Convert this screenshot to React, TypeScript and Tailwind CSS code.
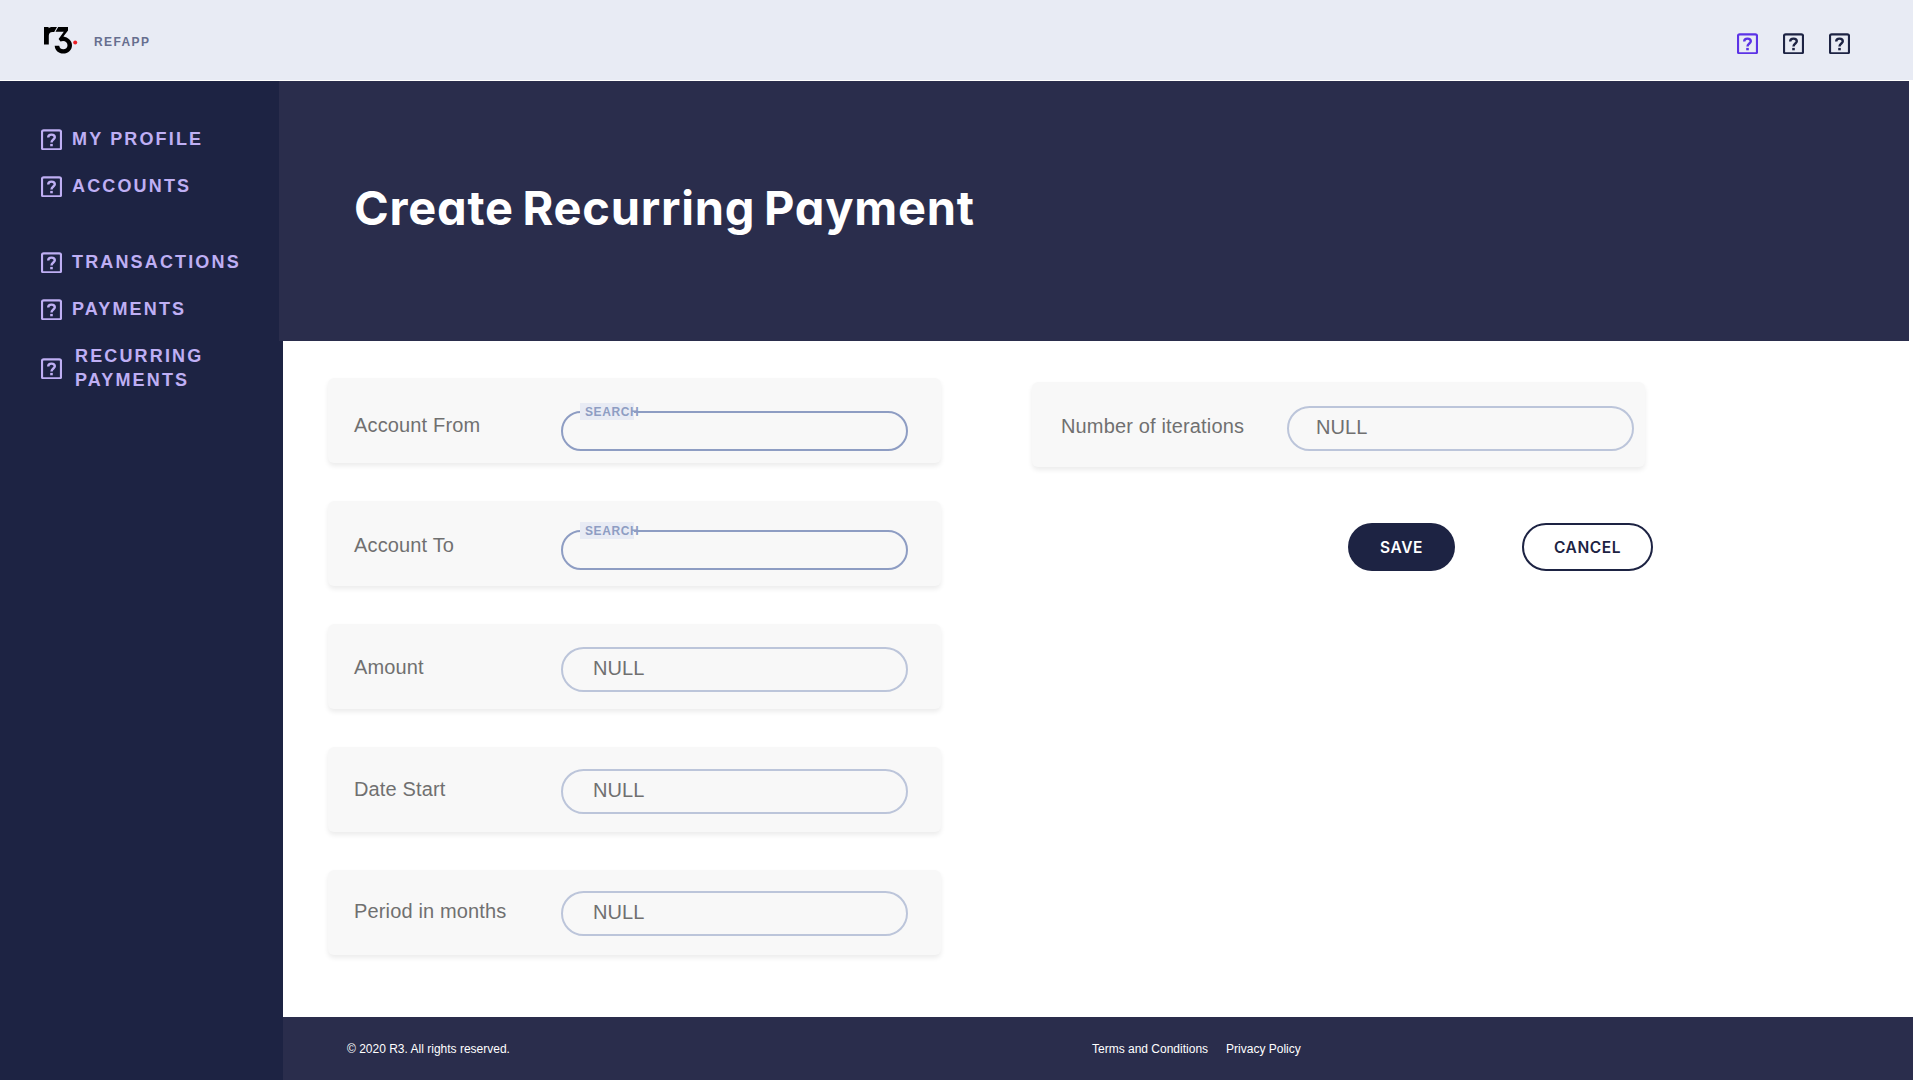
const label = "shrink-0 whitespace-nowrap text-[20px] leading-6 tracking-[0.15px] text-[#707070]";

function HelpBox({ className = "" }: { className?: string }) {
  return (
    <svg className={"shrink-0 " + className} width="21" height="21" viewBox="0 0 21 21" fill="none" stroke="currentColor">
      <rect x="1" y="1.300" width="19" height="19" rx="1.600" strokeWidth="2.200" />
      <path d="M7.200 8.500C7.200 6.500 8.600 5.600 10.500 5.600S13.800 6.700 13.800 8.300C13.800 10.500 10.500 10.600 10.500 13.500" strokeWidth="2.400" />
      <path d="M10.500 14.900v2.400" strokeWidth="2.600" />
    </svg>
  );
}

function Logo() {
  return (
    <svg className="shrink-0" width="36" height="30" viewBox="0 0 36 30">
      <path d="M2 2h4.6v1.2C7.600 2.300 9 2 10.500 2H15l-2.800 5H10.500C8 7 6.800 8.500 6.800 10.800V19.500H2z" fill="#000" />
      <path d="M16.200 2H26v3.500l-4.600 6C26 12.300 30 15.600 30 20.200c0 5-4 8.300-8.700 8.300-4.700 0-8.300-3-8.600-7.800h4.500c.3 2.300 2 3.600 4.100 3.600 2.400 0 4.200-1.700 4.200-4.100s-1.900-4.100-4.400-4.100c-1 0-1.900.2-2.600.5L16.600 14l5.200-7.200h-8.300z" fill="#000" />
      <circle cx="33.200" cy="17.500" r="2" fill="#ec1d24" />
    </svg>
  );
}

function NavItem({ text, className = "" }: { text: string; className?: string }) {
  return (
    <a className={"flex items-center " + className}>
      <HelpBox className="mb-[2px]" />
      <span className="pb-[3px] text-[18px] font-bold leading-6 tracking-[2.15px]">{text}</span>
    </a>
  );
}

function SearchInput({ className }: { className: string }) {
  return (
    <div className={"relative h-10 w-[347px] shrink-0 rounded-full border-2 border-[#8e9dc3] " + className}>
      <span className="absolute -top-[10px] left-[17px] h-[17px] w-[54px] whitespace-nowrap bg-[#e8ebf4] pl-[5px] text-[12px] font-bold leading-[19px] tracking-[0.6px] text-[#8e9dc3]">
        SEARCH
      </span>
    </div>
  );
}

function TextInput({ className }: { className: string }) {
  return (
    <div className={"h-[45px] w-[347px] shrink-0 rounded-full border-2 border-[#bcc5da] pt-[7px] text-[20px] leading-6 tracking-[0.1px] text-[#707070] " + className}>
      NULL
    </div>
  );
}

const card = "flex h-[85px] w-[613px] items-start rounded-[6px] bg-[#f8f8f8] shadow-[0_3px_5px_rgba(0,0,0,0.08)]";

export default function App() {
  return (
    <div className="flex h-[1080px] w-[1920px] flex-col overflow-hidden bg-white font-['Liberation_Sans',Arial,sans-serif]">
      <header className="mb-px flex h-20 w-[1913px] shrink-0 items-start bg-[#e8ebf4]">
        <div className="ml-[42px] mt-[25px]"><Logo /></div>
        <span className="ml-[16px] mt-[33px] text-[12px] font-bold leading-[18px] tracking-[1.4px] text-[#666e8e]">REFAPP</span>
        <div className="ml-auto mr-[63px] mt-[33px] flex gap-[25px] text-[#1d2343]">
          <HelpBox className="text-[#5c33e6]" />
          <HelpBox />
          <HelpBox />
        </div>
      </header>

      <div className="flex min-h-0 flex-1">
        <nav className="flex w-[283px] shrink-0 flex-col bg-[#1d2343] pl-[41px] text-[#bfaff4]">
          <NavItem text="MY PROFILE" className="mt-[46px] gap-[10px]" />
          <NavItem text="ACCOUNTS" className="mt-5 gap-[10px]" />
          <NavItem text="TRANSACTIONS" className="mt-[49px] gap-[10px]" />
          <NavItem text="PAYMENTS" className="mt-5 gap-[10px]" />
          <NavItem text="RECURRING PAYMENTS" className="mt-5 w-[190px] gap-[13px]" />
        </nav>

        <div className="flex min-w-0 flex-1 flex-col">
          <section className="z-10 -ml-1 h-[260px] w-[1630px] shrink-0 bg-[#2a2d4c] pl-[75px] pt-[91px]">
            <h1 className="whitespace-nowrap font-['Inter',sans-serif] text-[47px] font-bold leading-[72px] tracking-[0.75px] text-white [font-feature-settings:'cv11','ss03'] [word-spacing:-3px]">
              Create Recurring Payment
            </h1>
          </section>

          <main className="flex flex-1 items-start pl-[45px] pt-[37px]">
            <div className="flex flex-col gap-[38px]">
              <div className={card}>
                <span className={label + " ml-[26px] mt-[35px] w-[207px]"}>Account From</span>
                <SearchInput className="mt-[33px]" />
              </div>
              <div className={card}>
                <span className={label + " ml-[26px] mt-[32px] w-[207px]"}>Account To</span>
                <SearchInput className="mt-[29px]" />
              </div>
              <div className={card}>
                <span className={label + " ml-[26px] mt-[31px] w-[207px]"}>Amount</span>
                <TextInput className="mt-[23px] pl-[30px]" />
              </div>
              <div className={card}>
                <span className={label + " ml-[26px] mt-[30px] w-[207px]"}>Date Start</span>
                <TextInput className="mt-[22px] pl-[30px]" />
              </div>
              <div className={card}>
                <span className={label + " ml-[26px] mt-[29px] w-[207px]"}>Period in months</span>
                <TextInput className="mt-[21px] pl-[30px]" />
              </div>
            </div>

            <div className="ml-[91px] mt-1 flex flex-col">
              <div className={card}>
                <span className={label + " ml-[29px] mt-[32px] w-[226px]"}>Number of iterations</span>
                <TextInput className="mt-[24px] pl-[27px]" />
              </div>
              <div className="ml-[316px] mt-14 flex gap-[67px] font-['Inter',sans-serif] text-[15.5px] font-semibold tracking-[0.6px]">
                <button className="h-12 w-[107px] shrink-0 rounded-full bg-[#1d2343] pt-[2px] text-white">SAVE</button>
                <button className="h-12 w-[131px] shrink-0 rounded-full border-2 border-[#1d2343] pt-[2px] text-[#1d2343]">CANCEL</button>
              </div>
            </div>
          </main>

          <footer className="flex h-[63px] w-[1630px] shrink-0 items-start bg-[#2a2d4c] pl-16 pt-[24px] text-[12px] leading-[16px] text-white">
            <span className="w-[745px]">© 2020 R3. All rights reserved.</span>
            <a className="mr-[18px]">Terms and Conditions</a>
            <a>Privacy Policy</a>
          </footer>
        </div>
      </div>
    </div>
  );
}
